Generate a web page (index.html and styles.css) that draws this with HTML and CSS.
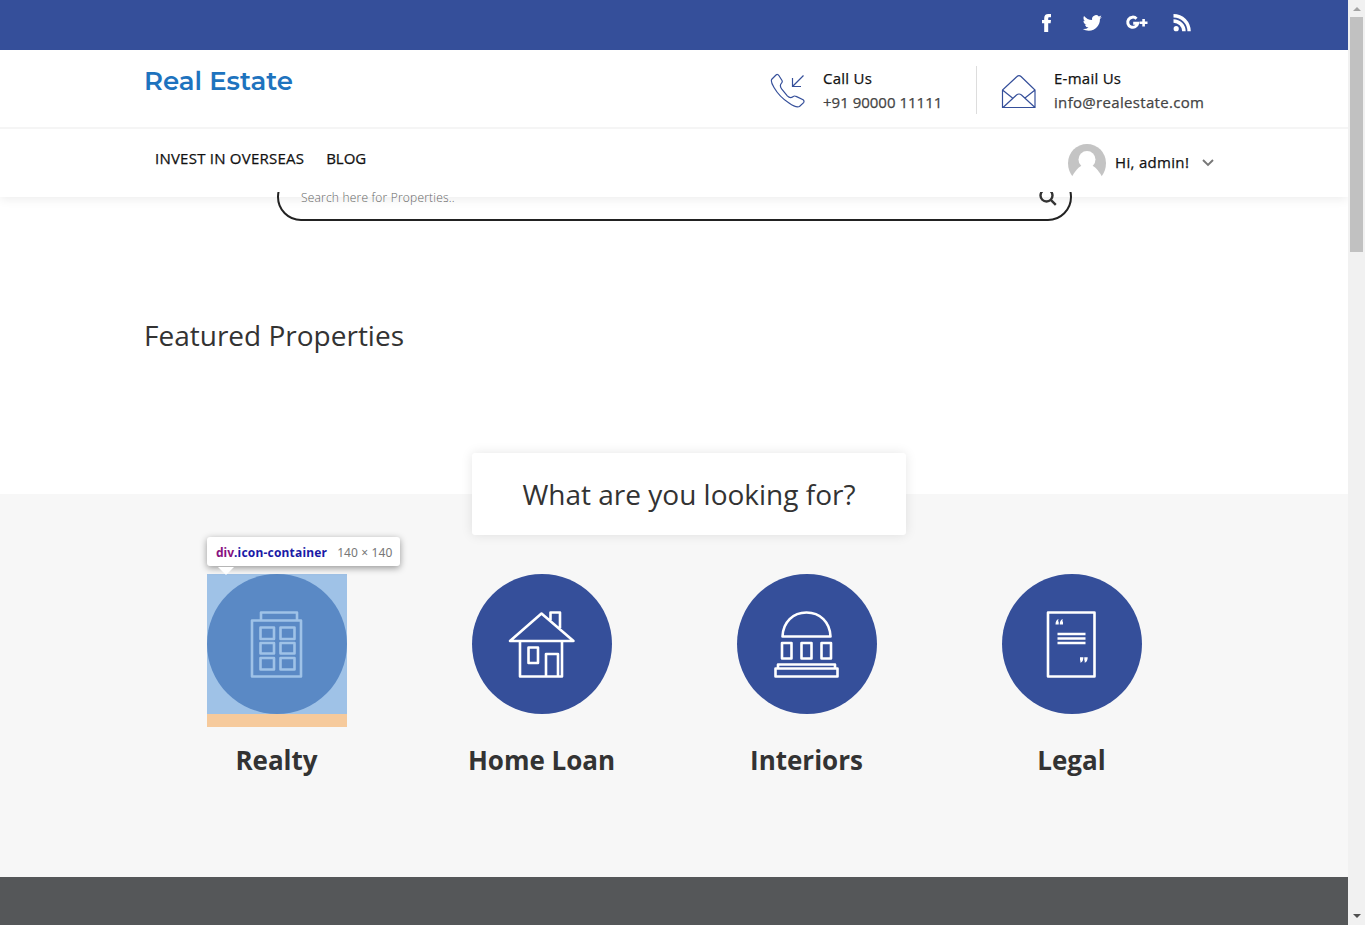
FILE: index.html
```html
<!DOCTYPE html>
<html lang="en">
<head>
<meta charset="utf-8">
<title>Real Estate</title>
<link rel="stylesheet" href="styles.css">
</head>
<body>
<div class="page">
  <div class="topbar">
    <svg class="social" viewBox="0 0 24 24"><path d="M9.200 21v-8.700H7V9h2.200V7.200C9.200 4.500 10.600 3 13.300 3H16v3.200h-1.500c-1 0-1.300.4-1.300 1.300V9H16l-.4 3.300h-2.400V21z"/></svg>
    <svg class="social" viewBox="0 0 24 24"><path transform="translate(2.700 2.400) scale(.8)" d="M23.950 4.570a10 10 0 0 1-2.820.770 4.960 4.960 0 0 0 2.160-2.720c-.950.550-2 .950-3.130 1.180a4.920 4.920 0 0 0-8.380 4.480C7.690 8.100 4.070 6.130 1.640 3.160a4.820 4.820 0 0 0-.670 2.480c0 1.710.870 3.210 2.190 4.100a4.900 4.900 0 0 1-2.230-.620v.060a4.920 4.920 0 0 0 3.950 4.830 5 5 0 0 1-2.210.080 4.940 4.940 0 0 0 4.600 3.420A9.870 9.870 0 0 1 0 19.540a13.990 13.990 0 0 0 7.550 2.210c9.050 0 14-7.500 14-13.980 0-.210 0-.420-.020-.630a9.940 9.940 0 0 0 2.420-2.570z"/></svg>
    <svg class="social" viewBox="0 0 24 24"><path class="ring" d="M11.500 7.700A5.100 5.100 0 1 0 12.800 12.300H8.200"/><path d="M17.300 10.500V8h2.600v2.500h2.600V13h-2.600v2.500h-2.600V13h-2.600v-2.500z"/></svg>
    <svg class="social" viewBox="0 0 24 24"><circle cx="6.200" cy="17.700" r="2.600"/><path d="M3.500 8.200v3.500a8.700 8.700 0 0 1 8.700 8.600h3.500A12.200 12.200 0 0 0 3.500 8.200zM3.500 3v3.400a13.900 13.900 0 0 1 13.900 13.900h3.400A17.300 17.300 0 0 0 3.500 3z"/></svg>
  </div>
  <header class="header">
    <div class="brand-row">
      <a class="brand">Real Estate</a>
      <div class="contact contact-call">
        <svg class="contact-icon" viewBox="0 0 36 36"><path d="M2 6 6 2q1.500-1.200 2.700.3L12 7.500q.7 1.500-.5 2.700c-2 2-1.200 4 .3 6l5.500 6.700c2 2 3.700 2.300 5.600.8q1.600-1.200 3.200-.3l7 3.400q1.500 1.200.5 2.800L29.500 33.500Q26 35 19 30 9.500 24 4 14.500 0 8 2 6zM33.500 2.500 22.500 13.500M22.500 5v8.500H31"/></svg>
        <div class="contact-text"><span class="label">Call Us</span><span class="value phone">+91 90000 11111</span></div>
      </div>
      <div class="contact contact-mail">
        <svg class="contact-icon" viewBox="0 0 36 36"><path d="M1.500 17v17.500h32.500V17L20 3.500q-2-2-4 0zM1.500 17l10 8M34 17l-10 8M2 34.500 15.500 22q2.500-2 5 0L34 34.500"/></svg>
        <div class="contact-text"><span class="label">E-mail Us</span><span class="value mail">info@realestate.com</span></div>
      </div>
    </div>
    <nav class="nav">
      <a class="nav-link">INVEST IN OVERSEAS</a>
      <a class="nav-link blog">BLOG</a>
      <div class="account">
        <svg class="avatar" viewBox="0 0 38 38"><path class="avatar-bg" d="M0 19a19 19 0 0 1 38 0c0 6-2 10-4.500 13.500H4.500C2 29 0 25 0 19z"/><circle cx="19" cy="15.500" r="8.500"/><path d="M3.500 33.500Q8 25 13 22h12q5 3 9.500 11.500z"/></svg>
        <span class="hello">Hi, admin!</span>
        <svg class="caret" viewBox="0 0 14 9"><path d="m2 2 5 5 5-5"/></svg>
      </div>
    </nav>
  </header>
  <div class="search-clip">
    <div class="search">
      <span class="placeholder">Search here for Properties..</span>
      <svg class="search-icon" viewBox="0 0 18 18"><circle cx="7.500" cy="7.500" r="6"/><path d="m11.800 11.800 5 5"/></svg>
    </div>
  </div>
  <section class="featured"><h2 class="featured-title">Featured Properties</h2></section>
  <section class="services">
    <h2 class="looking">What are you looking for?</h2>
    <div class="service-grid">
      <div class="service">
        <div class="inspector-tip"><b class="tip-tag">div</b><b class="tip-class">.icon-container</b><span class="tip-size">140 × 140</span></div>
        <div class="icon-box highlighted">
          <div class="disc"><svg class="glyph" viewBox="0 0 140 140"><path d="M45 46.500h49v56H45zM54 46v-7.500h36V46M53.500 53.500h13.500v11.500H53.500zM73.500 53.500h14v11.500h-14zM53.500 69h13.500v10.500H53.500zM73.500 69h14v10.500h-14zM53.500 84h13.500v11.500H53.500zM73.500 84h14v11.500h-14z"/></svg></div>
        </div>
        <h3 class="service-name">Realty</h3>
      </div>
      <div class="service">
        <div class="icon-box"><div class="disc"><svg class="glyph" viewBox="0 0 140 140"><path d="M38 67 69.500 39.500 101.500 67zM48 67v35.500h42V67M56.500 73.500h9.500v15.500h-9.500zM74 102V80h12v22M78.500 46v-7.500h9.500V54"/></svg></div></div>
        <h3 class="service-name">Home Loan</h3>
      </div>
      <div class="service">
        <div class="icon-box"><div class="disc"><svg class="glyph" viewBox="0 0 140 140"><path d="M45.500 62.500C46 48 56 38.500 69.500 38.500S93 48 93.500 62.500zM45 69h9.500v15.500H45zM64.500 69h10v15.500h-10zM84.500 69h9.500v15.500h-9.500zM41 94v-3.500h57V94M38.500 94.500h62v8h-62z"/></svg></div></div>
        <h3 class="service-name">Interiors</h3>
      </div>
      <div class="service">
        <div class="icon-box"><div class="disc"><svg class="glyph" viewBox="0 0 140 140"><path d="M46 38.500h46.500v64H46zM55.500 60h28M55.500 64.500h28M55.500 69h28"/><path class="quote" d="M56.500 45q-3 1-3 5.500h3.200V47.500h-.7zM60.700 45q-3 1-3 5.500h3.300V47.500h-.7zM78 83.300h3.400q0 4.500-3 5.500v-2.300H78zM82.300 83.300h3.400q0 4.500-3 5.500v-2.300h-.4z"/></svg></div></div>
        <h3 class="service-name">Legal</h3>
      </div>
    </div>
  </section>
  <footer class="footer"></footer>
</div>
<div class="scrollbar"><i class="arrow up"></i><i class="thumb"></i><i class="arrow down"></i></div>
</body>
</html>
```
FILE: styles.css
```css
* { box-sizing: border-box; }
body { margin: 0; display: flex; width: 1365px; height: 925px; overflow: hidden; background: #fff; color: #333; font-family: "Open Sans", "Noto Sans", sans-serif; }
svg { display: block; fill: none; flex: none; }
h2, h3 { margin: 0; }
.page { display: flex; flex-direction: column; width: 1348px; height: 925px; }
.topbar { display: flex; justify-content: flex-end; gap: 21px; height: 50px; padding: 11px 154px 0 0; background: #354f9a; }
.social { width: 24px; height: 24px; fill: #fff; }
.ring { fill: none; stroke: #fff; stroke-width: 3; }
.header { height: 147px; background: #fff; box-shadow: 0 2px 10px rgba(0,0,0,.08); clip-path: inset(0 0 -20px); }
.brand-row { display: flex; height: 79px; padding: 16px 0 0 144px; border-bottom: 2px solid #f5f5f5; }
.brand { width: 626px; color: #1e73be; font: 600 26px/30px Montserrat, "Open Sans", sans-serif; white-space: nowrap; }
.contact { display: flex; gap: 17px; height: 48px; }
.contact-call { width: 207px; border-right: 1px solid #ddd; }
.contact-mail { padding-left: 24px; }
.contact-icon { width: 36px; height: 36px; margin-top: 7px; stroke: #354f9a; stroke-width: 1.200; }
.contact-text { display: flex; flex-direction: column; align-items: flex-start; font-size: 15px; line-height: 24px; white-space: nowrap; -webkit-text-stroke: .25px currentColor; }
.label { color: #111; letter-spacing: .26px; }
.value { color: #444; }
.mail { letter-spacing: .32px; }
.nav { display: flex; height: 68px; padding: 15px 133px 0 155px; color: #111; font-size: 15px; white-space: nowrap; -webkit-text-stroke: .25px currentColor; }
.nav-link { line-height: 28px; letter-spacing: .23px; }
.blog { margin-left: 22px; letter-spacing: 0; }
.account { display: flex; margin-left: auto; }
.avatar { width: 38px; height: 38px; fill: #fff; }
.avatar-bg { fill: #c4c4c4; }
.hello { width: 75px; margin-left: 9px; line-height: 36px; letter-spacing: .32px; }
.caret { width: 14px; height: 9px; margin: 14px 0 0 11px; stroke: #777; stroke-width: 1.900; }
.search-clip { position: relative; display: flex; align-items: flex-end; height: 29px; margin: -5px 0 0 277px; width: 795px; overflow: hidden; }
.search { display: flex; flex: none; align-items: flex-start; justify-content: space-between; width: 795px; height: 48px; padding: 13px 13px 0 22px; border: 2px solid #222; border-radius: 24px; }
.placeholder { color: #666; font-size: 12px; font-weight: 300; line-height: 20px; letter-spacing: .2px; }
.search-icon { width: 18px; height: 18px; stroke: #333; stroke-width: 2.400; }
.featured { height: 273px; padding: 91px 0 0 144px; }
.featured-title { font-weight: 400; font-size: 28px; line-height: 46px; }
.services { display: flex; flex-direction: column; height: 383px; background: #f7f7f7; }
.looking { width: 434px; height: 82px; margin: -41px 0 39px 472px; background: #fff; border-radius: 3px; box-shadow: 0 0 12px rgba(0,0,0,.1); text-align: center; font-size: 28px; font-weight: 400; line-height: 82px; }
.service-grid { display: grid; grid-template-columns: repeat(4, 265px); padding-left: 144px; }
.service { position: relative; display: flex; flex-direction: column; align-items: center; }
.icon-box { width: 140px; height: 153px; margin-left: 1px; }
.disc { width: 140px; height: 140px; border-radius: 50%; background: #354f9a; }
.glyph { width: 140px; height: 140px; stroke: #fff; stroke-width: 2.600; stroke-linejoin: round; }
.quote { fill: #fff; stroke: none; }
.highlighted { background: linear-gradient(#9fc2e7 140px, #f6ca9c 140px); }
.highlighted .disc { background: #5a89c5; }
.highlighted .glyph { stroke: #9fc2e7; }
.service-name { font-size: 26px; font-weight: 700; line-height: 36px; margin-top: 15px; white-space: nowrap; }
.inspector-tip { position: absolute; left: 63px; top: -37px; width: 193px; height: 29px; padding-left: 9px; background: #fff; border-radius: 3px; box-shadow: 0 2px 7px rgba(0,0,0,.4); font: 12px/32px "Noto Sans", sans-serif; white-space: nowrap; }
.inspector-tip::after { content: ""; position: absolute; left: 11px; top: 30px; border: 8px solid transparent; border-top-color: #fff; border-bottom: 0; }
.tip-tag { color: #881280; }
.tip-class { color: #1a1aa6; letter-spacing: .2px; }
.tip-size { margin-left: 10px; color: #777; letter-spacing: .12px; }
.footer { height: 48px; background: #555759; }
.scrollbar { display: flex; flex-direction: column; align-items: center; width: 17px; height: 925px; background: #f1f1f1; }
.thumb { width: 13px; height: 235px; margin-top: 6px; background: #c1c1c1; }
.arrow { border: 4px solid transparent; }
.up { margin-top: 7px; border-top: 0; border-bottom-color: #a3a3a3; }
.down { margin: auto 0 7px; border-bottom: 0; border-top-color: #505050; }
```
